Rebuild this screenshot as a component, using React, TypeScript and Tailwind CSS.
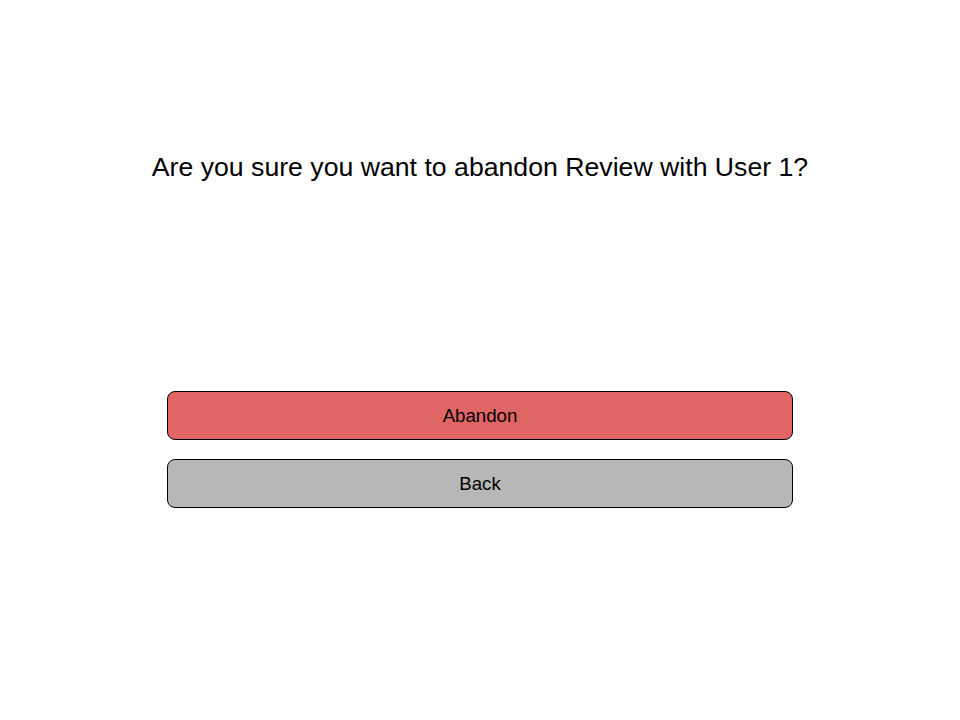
import React from 'react'

export default function App() {
  return (
    <div className="w-[960px] h-[720px] bg-white flex flex-col items-center font-['Liberation_Sans',Arial,sans-serif] text-black">
      <h1 className="mt-[151px] text-[26.67px] leading-[32px] font-normal">
        Are you sure you want to abandon Review with User 1?
      </h1>
      <div className="mt-[208px] w-[626px] flex flex-col gap-[19px]">
        <button className="h-[49px] w-full rounded-[8px] border border-black bg-[#e06666] text-[18.67px] leading-none pt-[2px] text-black">
          Abandon
        </button>
        <button className="h-[49px] w-full rounded-[8px] border border-black bg-[#b7b7b7] text-[18.67px] leading-none pt-[2px] text-black">
          Back
        </button>
      </div>
    </div>
  )
}
